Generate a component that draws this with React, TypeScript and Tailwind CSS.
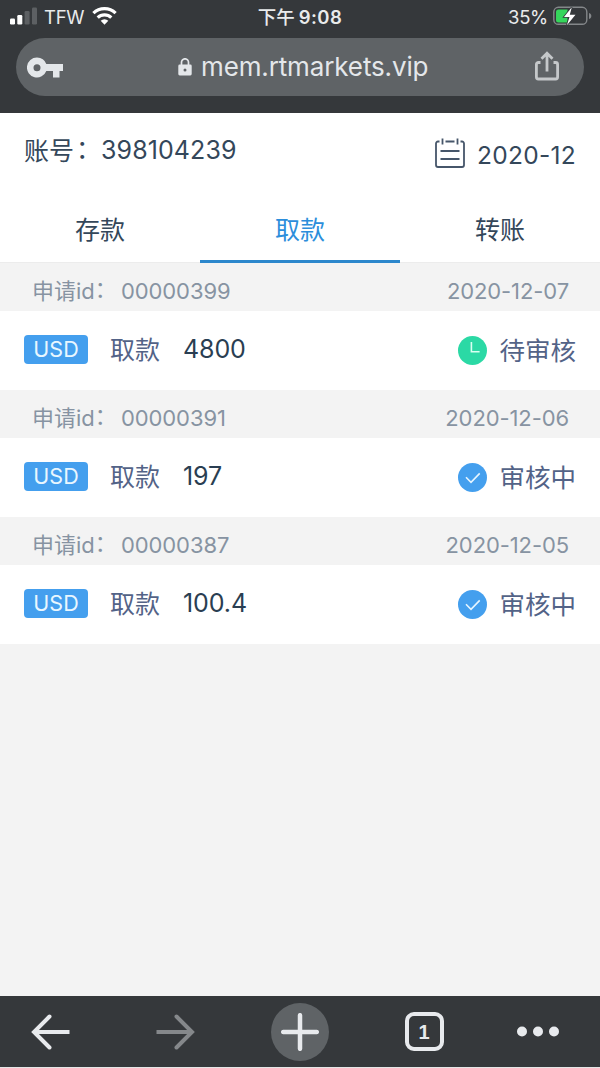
import React, { useState } from 'react';

interface Application {
  id: string;
  date: string;
  currency: string;
  amount: string;
  status: 'pending' | 'reviewing';
}

const tabs = ['存款', '取款', '转账'];

const applications: Application[] = [
  { id: '00000399', date: '2020-12-07', currency: 'USD', amount: '4800', status: 'pending' },
  { id: '00000391', date: '2020-12-06', currency: 'USD', amount: '197', status: 'reviewing' },
  { id: '00000387', date: '2020-12-05', currency: 'USD', amount: '100.4', status: 'reviewing' },
];

// --- Status bar ---
const StatusBar: React.FC = () => (
  <div className="grid h-[38px] grid-cols-3 items-start pt-[5px] text-[18.5px] leading-6 text-[#e9ebec]">
    <div className="flex items-center pl-[10px]">
      <svg className="mt-[-2px] h-[18px] w-[27px]" viewBox="0 0 27 18">
        <rect x="0" y="11.5" width="5" height="6" rx="1.2" fill="#fff" />
        <rect x="7.3" y="8" width="5" height="9.5" rx="1.2" fill="#fff" />
        <rect x="14.6" y="4" width="5" height="13.5" rx="1.2" fill="#5d6063" />
        <rect x="22" y="0.5" width="5" height="17" rx="1.2" fill="#5d6063" />
      </svg>
      <span className="ml-[7px] w-[41px] whitespace-nowrap tracking-[-0.3px]">TFW</span>
      <svg className="mt-[-2px] ml-[7px] h-[18px] w-[25px]" viewBox="0 0 25 18">
        <path d="M12.5 17.8 8.7 13.8a5.4 5.4 0 0 1 7.6 0z" fill="#fff" />
        <path d="M5.7 10.7a9.7 9.7 0 0 1 13.6 0" fill="none" stroke="#fff" strokeWidth="3.2" />
        <path d="M1.4 6.2a15.7 15.7 0 0 1 22.2 0" fill="none" stroke="#fff" strokeWidth="3.2" />
      </svg>
    </div>
    <div className="text-center text-[18.5px] font-semibold whitespace-nowrap">
      <span className="font-medium">下午</span>
      <span className="ml-[4px] tracking-[0.4px]">9:08</span>
    </div>
    <div className="flex items-center justify-end pr-[8px]">
      <span className="tracking-[-0.3px]">35%</span>
      <svg className="mt-[-2px] ml-[5px] h-[20px] w-[39px]" viewBox="0 0 39 20">
        <rect x="0.8" y="1.3" width="33" height="17" rx="4.6" fill="none" stroke="#84878a" strokeWidth="1.4" />
        <path d="M36 7v6c1.8-.5 2.3-1.8 2.3-3S37.8 7.5 36 7z" fill="#84878a" />
        <path d="M5.5 3.5H14.5V16.5H5.5a2.5 2.5 0 0 1-2.5-2.5V6a2.5 2.5 0 0 1 2.5-2.5z" fill="#35d65b" />
        <path d="M18.8 1.2 11 11h5.5l-2.6 8.2L22.5 8.7h-5.7z" fill="#fff" stroke="#35383b" strokeWidth="1.6" paintOrder="stroke" />
      </svg>
    </div>
  </div>
);

// --- Address bar ---
const AddressBar: React.FC = () => (
  <div className="mx-4 flex h-[58px] items-center justify-between rounded-full bg-[#5f6366] pr-[25px] pl-[11px] text-[#e4e7ea]">
    <svg className="mt-[2px] h-[22px] w-[36px]" viewBox="0 0 36 22" fill="#e4e7ea">
      <path
        fillRule="evenodd"
        d="M10 .5a10 10 0 1 0 9.3 13.5H26v6.5h6.5V14H36V7H19.3A10 10 0 0 0 10 .5zm0 6.7a3.5 3.5 0 1 1 0 7 3.5 3.5 0 0 1 0-7z"
      />
    </svg>
    <div className="mr-[-9px] flex items-center">
      <svg className="h-[18px] w-[14px]" viewBox="0 0 14 18">
        <rect x="0.3" y="6.5" width="13.4" height="11" rx="1.4" fill="#e4e7ea" />
        <path d="M3.5 7V4.3a3.5 3.5 0 0 1 7 0V7" fill="none" stroke="#e4e7ea" strokeWidth="1.7" />
        <circle cx="7" cy="12" r="1.5" fill="#5f6366" />
      </svg>
      <span className="ml-[9px] w-[228px] text-[26px] leading-8 tracking-[-0.13px] whitespace-nowrap">mem.rtmarkets.vip</span>
    </div>
    <svg className="mt-[-3px] h-[30px] w-[24px]" viewBox="0 0 24 30" fill="none" stroke="#c5c8ca" strokeWidth="2.8">
      <path d="M5.5 11.5H3.4a2 2 0 0 0-2 2V26a2 2 0 0 0 2 2h17.2a2 2 0 0 0 2-2V13.5a2 2 0 0 0-2-2h-2.1" />
      <path d="M12 20.5V3M6.5 7.7 12 2.2l5.5 5.5" />
    </svg>
  </div>
);

const CalendarIcon: React.FC = () => (
  <svg className="mt-[-1px] h-[30px] w-[30px]" viewBox="0 0 30 30" fill="none" stroke="#46566a" strokeWidth="1.8">
    <path d="M4.5 3.5H3a2 2 0 0 0-2 2V27a2 2 0 0 0 2 2h24a2 2 0 0 0 2-2V5.5a2 2 0 0 0-2-2h-1.5M10.5 3.5h9M7.5.5v6M22.5.5v6M5.5 13h19M5.5 21h19" />
  </svg>
);

const StatusIcon: React.FC<{ status: Application['status'] }> = ({ status }) =>
  status === 'pending' ? (
    <svg className="h-[29px] w-[29px]" viewBox="0 0 29 29">
      <circle cx="14.5" cy="14.5" r="14.5" fill="#2bd9a5" />
      <path d="M13.4 6v9.7h8.2" fill="none" stroke="#d9fff2" strokeWidth="1.6" />
    </svg>
  ) : (
    <svg className="h-[29px] w-[29px]" viewBox="0 0 29 29">
      <circle cx="14.5" cy="14.5" r="14.5" fill="#449fee" />
      <path d="m8 14.3 5 5 8.7-8.9" fill="none" stroke="#e6f5ff" strokeWidth="1.6" />
    </svg>
  );

const ApplicationRow: React.FC<{ item: Application }> = ({ item }) => (
  <div className="h-[127px]">
    <div className="flex h-[48px] items-center justify-between bg-[#f3f3f3] pt-[8px] pr-[31px] pl-8 text-[22px] text-[#8793a2]">
      <div className="flex items-center whitespace-nowrap">
        <span className="w-[89px]">
          申请id<span className="inline-block -translate-y-0.5">：</span>
        </span>
        <span className="tracking-[-0.1px]">{item.id}</span>
      </div>
      <span className="tracking-[-0.1px]">{item.date}</span>
    </div>
    <div className="flex h-[79px] items-center bg-white px-6 pb-px text-[25px] text-[#536387]">
      <span className="mb-px flex h-[29px] w-[64px] items-center justify-center rounded-[4px] bg-[#449fee] text-[21.5px] text-[#e9f7ff]">
        {item.currency}
      </span>
      <span className="ml-[22px] pt-px">取款</span>
      <span className="ml-[23px] tracking-[-0.1px] text-[#2a3e52]">{item.amount}</span>
      <div className="ml-auto flex items-center">
        <StatusIcon status={item.status} />
        <span className="ml-[12px] pt-[2px] text-[25.5px] whitespace-nowrap">
          {item.status === 'pending' ? '待审核' : '审核中'}
        </span>
      </div>
    </div>
  </div>
);

// --- Browser toolbar ---
const Toolbar: React.FC = () => (
  <div className="grid h-[71px] grid-cols-[100px_150px_100px_150px_100px] place-items-center bg-[#35383b]">
    <svg className="h-[36px] w-[40px]" viewBox="0 0 40 36" fill="none" stroke="#e8eaed" strokeWidth="4">
      <path d="M39.5 18H4" />
      <path d="M19.5 2.5 4 18l15.5 15.5" strokeLinecap="round" />
    </svg>
    <svg className="h-[36px] w-[40px]" viewBox="0 0 40 36" fill="none" stroke="#85888b" strokeWidth="4">
      <path d="M1.5 18H37" />
      <path d="M21.5 2.5 37 18 21.5 33.5" strokeLinecap="round" />
    </svg>
    <div className="flex h-[58px] w-[58px] items-center justify-center rounded-full bg-[#5f6366]">
      <svg className="h-[38px] w-[38px]" viewBox="0 0 38 38" stroke="#e8eaed" strokeWidth="4.5" strokeLinecap="round">
        <path d="M19 2.2v33.6M2.2 19h33.6" />
      </svg>
    </div>
    <div className="mr-[2px] flex h-[39px] w-[39px] items-center justify-center rounded-[9px] border-[4px] border-[#e8eaed] font-['Liberation_Sans',sans-serif] text-[20px] font-bold text-[#e8eaed]">
      1
    </div>
    <svg className="mr-[24px] h-[11px] w-[42px]" viewBox="0 0 42 11" fill="#e8eaed">
      <circle cx="5" cy="5.5" r="5" />
      <circle cx="21" cy="5.5" r="5" />
      <circle cx="37" cy="5.5" r="5" />
    </svg>
  </div>
);

export default function App() {
  const [activeTab, setActiveTab] = useState(1);

  return (
    <div className="flex h-[1068px] w-[600px] flex-col overflow-hidden bg-[#f3f3f3] font-['Inter','Noto_Sans_CJK_SC',sans-serif]">
      <div className="h-[113px] shrink-0 bg-[#35383b]">
        <StatusBar />
        <AddressBar />
      </div>

      <div className="h-[150px] shrink-0 border-b border-[#ececec] bg-white text-[25px] text-[#34475a]">
        <div className="flex h-[83px] justify-between px-6">
          <div className="flex h-[75px] items-center pt-px">
            <span className="w-[77px] pt-px whitespace-nowrap">
              账号<span className="inline-block translate-x-0.5 -translate-y-0.5">：</span>
            </span>
            <span className="text-[25px] tracking-[0.1px]">398104239</span>
          </div>
          <div className="flex h-[79px] items-center pt-px">
            <CalendarIcon />
            <span className="mt-[5px] ml-[12px] text-[24.5px] tracking-[0.3px]">2020-12</span>
          </div>
        </div>
        <div className="grid h-[67px] grid-cols-3">
          {tabs.map((tab, i) => (
            <button
              key={tab}
              onClick={() => setActiveTab(i)}
              className={
                i === activeTab
                  ? 'border-b-[3px] border-[#2c87cc] pt-[5px] text-[#2c8edb]'
                  : 'border-b-[3px] border-transparent pt-[5px]'
              }
            >
              {tab}
            </button>
          ))}
        </div>
      </div>

      {applications.map((item) => (
        <ApplicationRow key={item.id} item={item} />
      ))}

      <div className="mt-auto border-b border-[#e4e5e5]">
        <Toolbar />
      </div>
    </div>
  );
}
